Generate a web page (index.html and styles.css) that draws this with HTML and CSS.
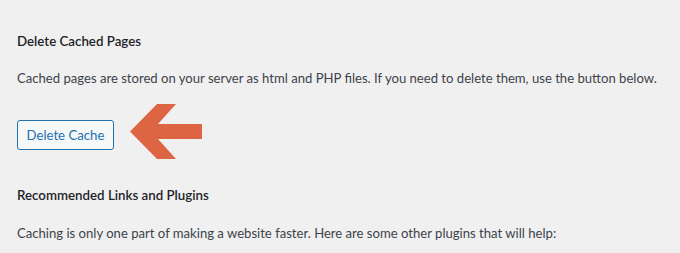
FILE: index.html
```html
<!DOCTYPE html>
<html>
<head>
<meta charset="utf-8">
<link rel="stylesheet" href="styles.css">
</head>
<body>
<div class="page">
  <h2 class="heading heading-first">Delete Cached Pages</h2>
  <p class="text">Cached pages are stored on your server as html and PHP files. If you need to delete them, use the button below.</p>
  <div class="action-row">
    <button class="button">Delete Cache</button>
    <svg class="arrow" width="72" height="55" viewBox="130 104 72 55" xmlns="http://www.w3.org/2000/svg">
      <polygon points="130,131.5 157,104 176,104 158,124 202,124 202,139 158,139 176,159 157,159" fill="#dd6544"/>
    </svg>
  </div>
  <h2 class="heading heading-second">Recommended Links and Plugins</h2>
  <p class="text text-second">Caching is only one part of making a website faster. Here are some other plugins that will help:</p>
</div>
</body>
</html>
```
FILE: styles.css
```css
html, body {
  margin: 0;
  padding: 0;
  background: #f0f0f1;
}
body {
  width: 680px;
  height: 253px;
  overflow: hidden;
  font-family: "Lato", "Open Sans", sans-serif;
  color: #3c434a;
}
.page {
  padding: 0 0 0 17px;
  display: flow-root;
}
.heading {
  margin: 0;
  font-size: 13.3px;
  line-height: 20px;
  font-weight: 600;
  color: #1d2327;
  white-space: nowrap;
}
.heading-first {
  margin-top: 31px;
}
.heading-second {
  margin-top: 35px;
}
.text {
  margin: 17px 0 0;
  font-size: 13.1px;
  line-height: 20px;
  white-space: nowrap;
}
.action-row {
  display: flex;
  align-items: flex-start;
  gap: 16px;
  margin-top: 32px;
}
.button {
  box-sizing: border-box;
  height: 30px;
  padding: 0 8.5px;
  margin: 0;
  border: 1px solid #2271b1;
  border-radius: 3px;
  background: #f6f7f7;
  color: #2271b1;
  font-family: inherit;
  font-size: 13.2px;
  line-height: 28px;
  cursor: pointer;
}
.arrow {
  display: block;
  margin-top: -16px;
  margin-bottom: -9px;
}
.text-second {
  margin-top: 18px;
}
```
